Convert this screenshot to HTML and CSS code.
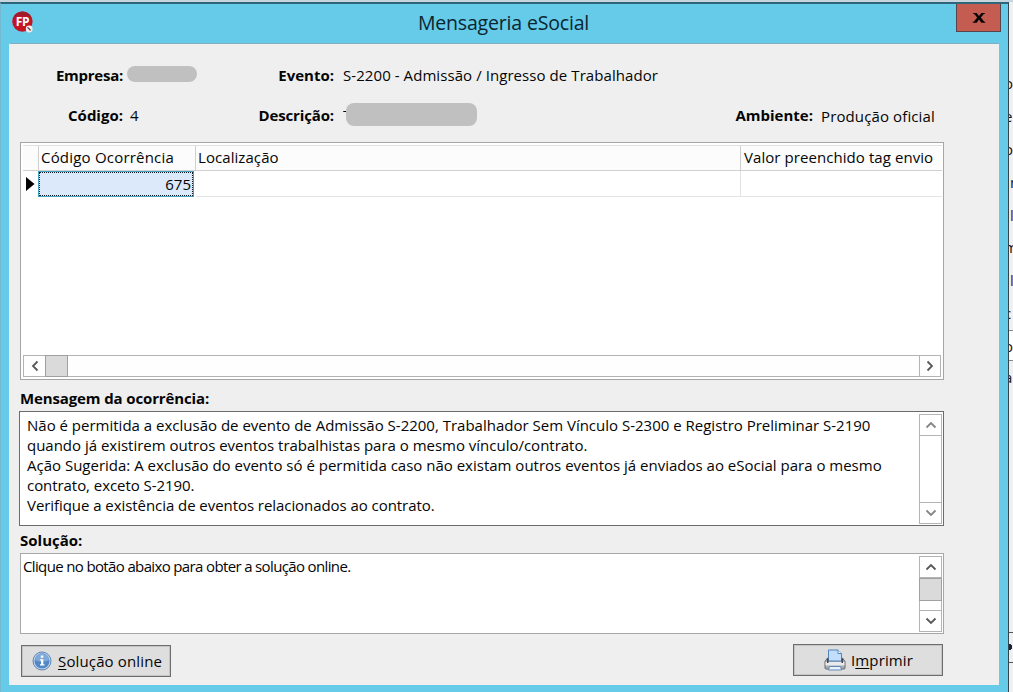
FILE: index.html
```
<!DOCTYPE html>
<html lang="pt-BR">
<head>
<meta charset="utf-8">
<title>Mensageria eSocial</title>
<link rel="stylesheet" href="styles.css">
</head>
<body>
<div class="desktop">
  <section class="window">
    <header class="titlebar">
      <svg class="app-icon" width="22" height="22" viewBox="0 0 22 22">
        <circle cx="10.4" cy="10.6" r="10.2" fill="#c41424"/>
        <path d="M1 7a10 10 0 0 1 18.8 0c-5-3-13-3-18.8 0z" fill="#a01c2c"/>
        <text x="10.4" y="14.8" text-anchor="middle" class="app-letters">FP</text>
        <circle cx="17.2" cy="18" r="3.4" fill="#f6eaea"/>
        <path d="M15.6 16.4l3 3" stroke="#603038" stroke-width="1.3"/>
      </svg>
      <h1><span class="t-title">Mensageria eSocial</span></h1>
      <button class="close" aria-label="Fechar"><svg width="14" height="12" viewBox="0 0 14 12"><path d="M1 1h3.6L7 4.1 9.400 1H13v.7h-1L8.800 5.600l3.500 4.200h.9v.9H9.300L7 7.400l-2.300 3.300H.8v-.9h.9l3.500-4.200L2 1.700H1z" fill="#050505"/></svg></button>
    </header>
    <main class="client">
      <div class="fields row-one">
        <b class="label l1"><span class="t-empresa">Empresa:</span></b><i class="mask m1"></i>
        <b class="label l2"><span class="t-evento">Evento:</span></b><span class="value"><span class="t-evval">S-2200 - Admissão / Ingresso de Trabalhador</span></span>
      </div>
      <div class="fields row-two">
        <b class="label l1"><span class="t-codigo">Código:</span></b><span class="value code">4</span>
        <b class="label l2"><span class="t-desc">Descrição:</span></b><span class="value initial">T</span><i class="mask m2"></i>
        <b class="label l3"><span class="t-amb">Ambiente:</span></b><span class="value env"><span class="t-prod">Produção oficial</span></span>
      </div>
      <div class="grid">
        <div class="tr head"><div></div><div><span class="t-cod">Código Ocorrência</span></div><div><span class="t-loc">Localização</span></div><div><span class="t-valor">Valor preenchido tag envio</span></div></div>
        <div class="tr data"><div><svg width="9" height="14" viewBox="0 0 9 14"><path d="M0 0l8.500 7L0 14z" fill="#000"/></svg></div><div class="selected"><span class="t-num">675</span></div><div></div><div></div></div>
        <div class="hscroll">
          <div class="sbtn"><svg width="8" height="12" viewBox="0 0 8 12"><path d="M6.500 1.500L2 6l4.500 4.500"/></svg></div><div class="thumb"></div><div class="track"></div>
          <div class="sbtn end"><svg width="8" height="12" viewBox="0 0 8 12"><path d="M1.500 1.500L6 6l-4.500 4.500"/></svg></div>
        </div>
      </div>
      <b class="caption c1"><span class="t-msg">Mensagem da ocorrência:</span></b>
      <div class="memo">
        <div class="lines">
          <p class="t-m1">Não é permitida a exclusão de evento de Admissão S-2200, Trabalhador Sem Vínculo S-2300 e Registro Preliminar S-2190</p>
          <p class="t-m2">quando já existirem outros eventos trabalhistas para o mesmo vínculo/contrato.</p>
          <p class="t-m3">Ação Sugerida: A exclusão do evento só é permitida caso não existam outros eventos já enviados ao eSocial para o mesmo</p>
          <p class="t-m4">contrato, exceto S-2190.</p>
          <p class="t-m5">Verifique a existência de eventos relacionados ao contrato.</p>
        </div>
        <div class="vscroll off">
          <div class="sbtn"><svg width="12" height="8" viewBox="0 0 12 8"><path d="M1.500 6.500L6 2l4.500 4.500"/></svg></div><div class="track"></div>
          <div class="sbtn end"><svg width="12" height="8" viewBox="0 0 12 8"><path d="M1.500 1.500L6 6l4.500-4.500"/></svg></div>
        </div>
      </div>
      <b class="caption c2"><span class="t-sol">Solução:</span></b>
      <div class="memo solution">
        <div class="lines"><p class="t-click">Clique no botão abaixo para obter a solução online.</p></div>
        <div class="vscroll">
          <div class="sbtn"><svg width="12" height="8" viewBox="0 0 12 8"><path d="M1.500 6.500L6 2l4.500 4.500"/></svg></div><div class="thumb"></div><div class="track"></div>
          <div class="sbtn end"><svg width="12" height="8" viewBox="0 0 12 8"><path d="M1.500 1.500L6 6l4.500-4.500"/></svg></div>
        </div>
      </div>
      <div class="actions">
        <button class="action online">
          <svg width="20" height="20" viewBox="0 0 20 20"><circle cx="10" cy="10" r="9" fill="#c3d4e8" stroke="#5d85b5"/><circle cx="10" cy="10" r="7.500" fill="#5288c8"/><path d="M3 9a7 7 0 0 1 14 0c-4 2-10 2-14 0z" fill="#7fa9da"/><path d="M8.800 4.500h2.500v2.200H8.800zM8 8.200h3.300v5H12.500v1.300H8v-1.300h1.100V9.500H8z" fill="#fff"/></svg>
          <span class="t-online"><u>S</u>olução online</span>
        </button>
        <button class="action print">
          <svg width="22" height="22" viewBox="0 0 22 22"><path d="M3.500 9L1 12.500V19q0 1 1 1h18q1 0 1-1v-6.500L18.500 9z" fill="#a9adb2" stroke="#64686d"/><path d="M1.500 13h19v3.500h-19z" fill="#e8eaec"/><path d="M4.500 1h9.500l3.500 3.500V12h-13z" fill="#c3defa" stroke="#4e83bd"/><path d="M14 1v3.500h3.500" fill="#fff" stroke="#4e83bd"/><path d="M3 9.500V14h1.500V9.500zM17.500 9.500V14H19V9.500z" fill="#44484c"/><path d="M5.500 17.500h11l1 3.500h-13z" fill="#e8f2fc" stroke="#6289b5"/></svg>
          <span class="t-print">I<u>m</u>primir</span>
        </button>
      </div>
    </main>
  </section>
  <aside class="behind"><span>o</span><span>e</span><span>o</span><span class="r">n</span><span class="r red">l</span><span>m</span><span class="r red">l</span><span>c</span><span class="boxed">o</span><span>a</span><i class="lower"></i></aside>
</div>
</body>
</html>
```
FILE: styles.css
```
* { box-sizing: border-box; }
body { margin: 0; width: 1013px; height: 692px; overflow: hidden; background: #c9d5de; font: 15px/20px "Open Sans", "Noto Sans", sans-serif; color: #050505; }
h1, p { margin: 0; }
button { font: inherit; color: inherit; border-radius: 0; padding: 0; }
span[class^="t-"], p { display: inline-block; white-space: nowrap; }
.desktop { display: flex; height: 692px; padding-top: 2px; }
.window { width: 1009px; height: 690px; background: #66cae9; border-top: 2px solid #2d6579; border-right: 1px solid #34444d; border-left: 1px solid #75b9d1; }
.titlebar { display: grid; grid-template-columns: 100px 1fr 100px; height: 39px; }
.app-icon { margin: 7px 0 0 11px; }
.app-letters { font: bold 12px "Open Sans", sans-serif; letter-spacing: -0.5px; fill: #fff; }
h1 { font-size: 19.5px; font-weight: 400; line-height: 26px; padding: 6px 2px 0 0; text-align: center; color: #0a2630; letter-spacing: -0.17px; }
.close { justify-self: end; margin-right: 7px; width: 45px; height: 28px; border: 1px solid #56464c; border-top: 0; background: #c55c52; display: flex; align-items: center; justify-content: center; }
.client { margin-left: 8px; width: 990px; height: 642px; background: #efefef; border-top: 1px solid #83aebe; border-left: 1px solid #d8f0f7; padding-left: 10px; }
.fields { display: flex; align-items: center; }
.row-one { height: 40px; margin-top: 11px; }
.row-two { height: 40px; }
.label { text-align: right; font-weight: 700; color: #050505; flex: none; }
.l1 { width: 103px; }
.mask { display: block; background: #c0c0c0; flex: none; }
.m1 { width: 70px; height: 16px; border-radius: 8px; margin-left: 4px; margin-top: -2px; }
.l2 { width: 137px; }
.row-two .l2 { width: 194px; }
.value { margin-left: 9px; }
.value.code { width: 10px; margin-left: 7px; }
.value.initial { width: 3px; overflow: hidden; }
.m2 { width: 131px; height: 23px; border-radius: 8px; margin-top: -2px; }
.l3 { width: 336px; }
.value.env { margin: 2px 0 0 8px; }
.t-empresa { letter-spacing: -0.25px; }
.t-evval { letter-spacing: 0.07px; }
.t-desc, .t-msg { letter-spacing: -0.13px; }
.t-prod { letter-spacing: 0.12px; }
.t-cod { letter-spacing: 0.2px; }
.t-loc, .t-valor { letter-spacing: 0.07px; }
.t-m2 { letter-spacing: -0.01px; }
.t-m4, .t-m5 { letter-spacing: -0.06px; }
.t-click { letter-spacing: -0.64px; }
.t-online { letter-spacing: 0.14px; }
.t-print { letter-spacing: 0.12px; }
.grid { width: 924px; height: 238px; margin-top: 7px; border: 1px solid #a3a6a9; background: #fff; padding: 2px; display: flex; flex-direction: column; }
.tr { display: grid; grid-template-columns: 16px 157px 545px 1fr; width: 919px; }
.tr > div { border-right: 1px solid #e2e2e2; border-bottom: 1px solid #e4e4e4; display: flex; align-items: center; }
.head { height: 26px; background: #fcfcfc; border-top: 1px solid #e0e0e0; }
.head > div { border-right-color: #cfcfcf; border-bottom-color: #d0d0d0; padding: 0 0 2px 2px; }
.head > div:last-child { padding-left: 3px; }
.tr > div:last-child { border-right: 0; }
.data { height: 26px; }
.data > div:first-child { border-bottom-color: #fff; justify-content: center; }
.data .selected { background: #dce9fb; border: 1px solid #48a0c4; outline: 1px dotted #101820; outline-offset: -2px; justify-content: flex-end; padding-right: 2px; margin: 0 2px 0 -1px; }
.hscroll { margin-top: auto; width: 918px; height: 22px; display: flex; border: 1px solid #b4b4b4; background: #fefefe; }
.sbtn { flex: none; width: 21px; height: 20px; display: flex; align-items: center; justify-content: center; }
.sbtn path { fill: none; stroke: #585858; stroke-width: 1.8; }
.track { flex: 1; }
.hscroll .sbtn.end { border-left: 1px solid #b4b4b4; }
.hscroll .thumb { width: 23px; height: 22px; margin-top: -1px; }
.thumb { background: #dadada; border: 1px solid #a0a0a0; flex: none; }
.caption { display: block; }
.c1 { height: 31px; padding-top: 8px; }
.memo { width: 925px; height: 115px; margin-left: -1px; border: 1px solid #6c6c6c; background: #fff; display: flex; justify-content: space-between; }
.lines { display: flex; flex-direction: column; align-items: flex-start; padding: 3px 0 0 7px; }
.vscroll { flex: none; width: 23px; margin: 2px 1px 2px 0; height: 110px; border: 1px solid #b4b4b4; display: flex; flex-direction: column; }
.vscroll .sbtn { width: 21px; height: 21px; border-bottom: 1px solid #b4b4b4; }
.vscroll .sbtn.end { border-bottom: 0; border-top: 1px solid #b4b4b4; }
.vscroll.off path { stroke: #858585; }
.c2 { height: 27px; padding-top: 4px; }
.solution { width: 924px; height: 81px; margin-left: 0; border-color: #a6a8aa; }
.solution .lines { padding: 2px 0 0 2px; }
.solution .vscroll { height: 76px; margin: 2px 1px 0 0; }
.solution .thumb { height: 23px; width: 23px; margin-left: -1px; }
.actions { width: 924px; display: flex; justify-content: space-between; align-items: flex-start; padding: 10px 1px 0; }
.action { width: 150px; height: 32px; border: 1px solid #6d6d6d; outline: 1px solid #c5c5c5; outline-offset: -2px; background: #dedede; display: flex; align-items: center; }
.online { margin-top: 1px; padding-left: 10px; gap: 6px; }
.print { padding-left: 30px; gap: 5px; }
u { text-decoration: underline; text-underline-offset: 2px; }
.behind { width: 4px; height: 690px; background: #f0f0f0; display: flex; flex-direction: column; padding-top: 65px; overflow: hidden; }
.behind span { display: block; flex: none; height: 32.9px; line-height: 32px; text-indent: -5px; color: #151523; }
.behind .r { text-indent: 1px; }
.behind .red { color: #652019; }
.behind .boxed { height: 31px; line-height: 30px; border-top: 1px solid #888; border-bottom: 1px solid #888; background: #fff; }
.lower { display: block; flex: none; margin-top: 238px; height: 31px; border-top: 1px solid #555; border-bottom: 1px solid #555; background: radial-gradient(circle at 0 14px, #22223c 3px, transparent 3.5px); }
```
